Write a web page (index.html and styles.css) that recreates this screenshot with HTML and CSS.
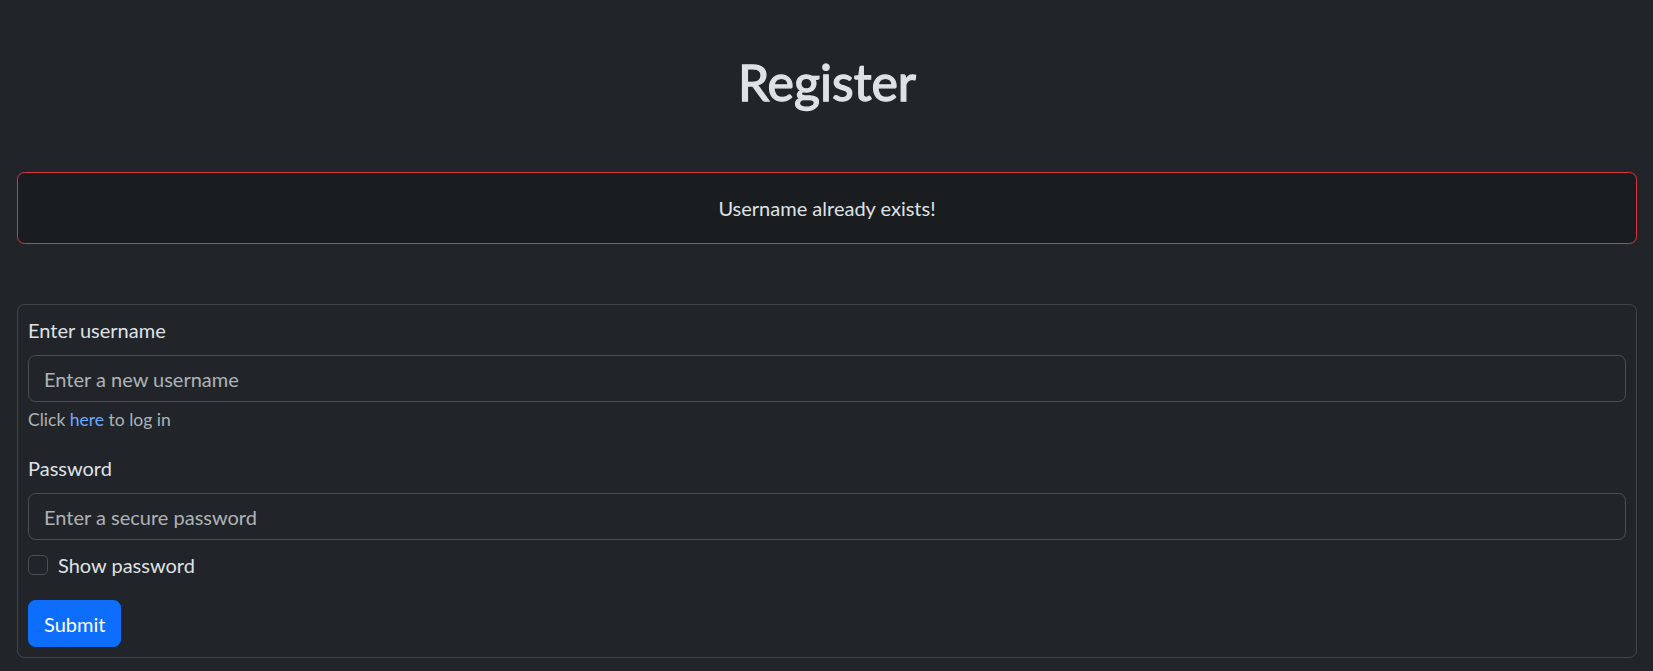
FILE: index.html
```html
<!DOCTYPE html>
<html lang="en">
<head>
<meta charset="utf-8">
<title>Register</title>
<link rel="stylesheet" href="styles.css">
</head>
<body>
<div class="page">
  <h1 class="title">Register</h1>
  <div class="alert">Username already exists!</div>
  <form class="card">
    <div class="group group-user">
      <label class="label" for="username">Enter username</label>
      <input class="input" id="username" type="text" placeholder="Enter a new username">
      <div class="help">Click <a class="link" href="#">here</a> to log in</div>
    </div>
    <div class="group group-pass">
      <label class="label" for="password">Password</label>
      <input class="input" id="password" type="password" placeholder="Enter a secure password">
    </div>
    <div class="check">
      <input class="check-box" id="show" type="checkbox">
      <label class="check-label" for="show">Show password</label>
    </div>
    <button class="btn" type="button">Submit</button>
  </form>
</div>
</body>
</html>
```
FILE: styles.css
```css
html, body {
  margin: 0;
  padding: 0;
}
body {
  background: #212529;
  color: #dee2e6;
  font-family: Lato, "Noto Sans", sans-serif;
  font-size: 20px;
  line-height: 1.5;
}
.page {
  padding: 0 16px 0 17px;
}
.title {
  margin: 52px 0 60px;
  text-align: center;
  font-size: 50px;
  font-weight: 400;
  line-height: 1.2;
  color: #dee2e6;
  -webkit-text-stroke: 1.3px #dee2e6;
}
.alert {
  border: 1px solid #dc3545;
  border-radius: 7.5px;
  background: #1a1d20;
  color: #dee2e6;
  padding: 20px;
  text-align: center;
  margin-bottom: 60px;
}
.card {
  display: flex;
  flex-direction: column;
  align-items: flex-start;
  border: 1px solid rgba(255, 255, 255, 0.15);
  border-radius: 7.5px;
  padding: 10px;
  margin: 0;
}
.group {
  display: flex;
  flex-direction: column;
  align-self: stretch;
}
.group-user {
  margin-bottom: 20px;
}
.group-pass {
  margin-bottom: 10px;
}
.label {
  display: block;
  margin-bottom: 10px;
}
.input {
  display: block;
  box-sizing: border-box;
  width: 100%;
  height: 47px;
  padding: 7.5px 15px;
  font: inherit;
  font-size: 20px;
  line-height: 30px;
  color: #dee2e6;
  background: #212529;
  border: 1px solid #495057;
  border-radius: 7.5px;
  outline: none;
}
.input::placeholder {
  color: rgba(222, 226, 230, 0.75);
}
.help {
  margin-top: 5px;
  font-size: 17.5px;
  line-height: 1.5;
  color: rgba(222, 226, 230, 0.75);
}
.link {
  color: #6ea8fe;
  text-decoration: none;
}
.check {
  display: flex;
  align-items: flex-start;
  min-height: 30px;
  margin-bottom: 20px;
}
.check-box {
  appearance: none;
  -webkit-appearance: none;
  box-sizing: border-box;
  width: 20px;
  height: 20px;
  margin: 5px 10px 0 0;
  background: #212529;
  border: 1px solid #495057;
  border-radius: 5px;
}
.check-label {
  line-height: 30px;
}
.btn {
  font: inherit;
  font-size: 20px;
  line-height: 30px;
  padding: 7.5px 15px;
  color: #fff;
  background: #0d6efd;
  border: 1px solid #0d6efd;
  border-radius: 7.5px;
}
```
